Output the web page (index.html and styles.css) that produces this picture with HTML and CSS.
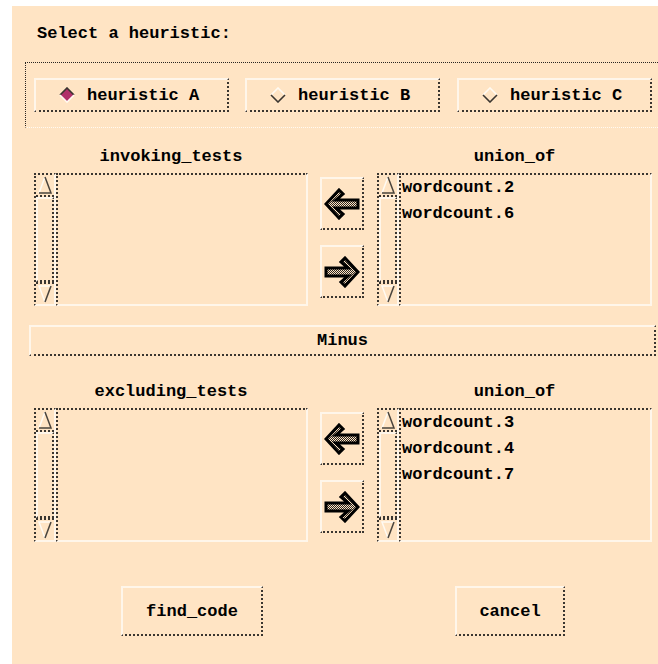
FILE: index.html
```html
<!DOCTYPE html>
<html lang="en">
<head>
    <meta charset="UTF-8">
    <meta name="viewport" content="width=device-width, initial-scale=1.0">
    <title>Select a heuristic</title>

    <link rel="stylesheet" href="styles.css">
</head>
<body>
    <svg class="defs" width="0" height="0">
        <defs>
            <!-- trame grise des flèches -->
            <pattern id="stipple" width="2" height="2" patternUnits="userSpaceOnUse">
                <rect width="2" height="2" fill="#ffe4c4"/>
                <rect width="1" height="1" fill="#2a2622"/>
                <rect x="1" y="1" width="1" height="1" fill="#2a2622"/>
            </pattern>
        </defs>
    </svg>

    <div class="panel">
        <div class="title">Select a heuristic:</div>

        <!-- Choix de l'heuristique -->
        <div class="radio-box">
            <div class="radio raised">
                <svg class="diamond" width="16" height="16" viewBox="0 0 16 16">
                    <polygon points="8,1 15,8 8,15 1,8" fill="#b0306a"/>
                    <polyline points="1,8 8,1 15,8" fill="none" stroke="#3a3530" stroke-width="1.6"/>
                    <polyline points="1,8 8,15 15,8" fill="none" stroke="#fffaf2" stroke-width="1.6"/>
                </svg>
                heuristic A
            </div>
            <div class="radio raised">
                <svg class="diamond" width="16" height="16" viewBox="0 0 16 16">
                    <polyline points="1,8 8,1 15,8" fill="none" stroke="#fffaf2" stroke-width="1.6"/>
                    <polyline points="1,8 8,15 15,8" fill="none" stroke="#3a3530" stroke-width="1.6"/>
                </svg>
                heuristic B
            </div>
            <div class="radio raised">
                <svg class="diamond" width="16" height="16" viewBox="0 0 16 16">
                    <polyline points="1,8 8,1 15,8" fill="none" stroke="#fffaf2" stroke-width="1.6"/>
                    <polyline points="1,8 8,15 15,8" fill="none" stroke="#3a3530" stroke-width="1.6"/>
                </svg>
                heuristic C
            </div>
        </div>

        <!-- Tests invoqués -->
        <div class="section">
            <div class="col-label">invoking_tests</div>
            <div></div>
            <div class="col-label">union_of</div>

            <div class="list">
                <div class="scrollbar">
                    <div class="sb-arrow"><svg width="16" height="20" viewBox="0 0 16 20"><polyline points="2,18 8,2" fill="none" stroke="#fffaf2" stroke-width="1.5"/><polyline points="8,2 14,18 2,18" fill="none" stroke="#4a443d" stroke-width="1.5"/></svg></div>
                    <div class="sb-thumb"></div>
                    <div class="sb-arrow"><svg width="16" height="20" viewBox="0 0 16 20"><polyline points="14,2 2,2 8,18" fill="none" stroke="#fffaf2" stroke-width="1.5"/><polyline points="8,18 14,2" fill="none" stroke="#4a443d" stroke-width="1.5"/></svg></div>
                </div>
                <div class="items"></div>
            </div>

            <div class="arrows">
                <div class="arrow-btn raised">
                    <svg width="36" height="32" viewBox="0 0 36 32"><polygon points="2,16 15,2 19,6 12,12 34,12 34,20 12,20 19,26 15,30" fill="url(#stipple)" stroke="#000" stroke-width="3"/></svg>
                </div>
                <div class="arrow-btn raised">
                    <svg width="36" height="32" viewBox="0 0 36 32"><polygon points="34,16 21,2 17,6 24,12 2,12 2,20 24,20 17,26 21,30" fill="url(#stipple)" stroke="#000" stroke-width="3"/></svg>
                </div>
            </div>

            <div class="list">
                <div class="scrollbar">
                    <div class="sb-arrow"><svg width="16" height="20" viewBox="0 0 16 20"><polyline points="2,18 8,2" fill="none" stroke="#fffaf2" stroke-width="1.5"/><polyline points="8,2 14,18 2,18" fill="none" stroke="#4a443d" stroke-width="1.5"/></svg></div>
                    <div class="sb-thumb"></div>
                    <div class="sb-arrow"><svg width="16" height="20" viewBox="0 0 16 20"><polyline points="14,2 2,2 8,18" fill="none" stroke="#fffaf2" stroke-width="1.5"/><polyline points="8,18 14,2" fill="none" stroke="#4a443d" stroke-width="1.5"/></svg></div>
                </div>
                <div class="items">
                    <div>wordcount.2</div>
                    <div>wordcount.6</div>
                </div>
            </div>
        </div>

        <div class="minus raised">Minus</div>

        <!-- Tests exclus -->
        <div class="section second">
            <div class="col-label">excluding_tests</div>
            <div></div>
            <div class="col-label">union_of</div>

            <div class="list">
                <div class="scrollbar">
                    <div class="sb-arrow"><svg width="16" height="20" viewBox="0 0 16 20"><polyline points="2,18 8,2" fill="none" stroke="#fffaf2" stroke-width="1.5"/><polyline points="8,2 14,18 2,18" fill="none" stroke="#4a443d" stroke-width="1.5"/></svg></div>
                    <div class="sb-thumb"></div>
                    <div class="sb-arrow"><svg width="16" height="20" viewBox="0 0 16 20"><polyline points="14,2 2,2 8,18" fill="none" stroke="#fffaf2" stroke-width="1.5"/><polyline points="8,18 14,2" fill="none" stroke="#4a443d" stroke-width="1.5"/></svg></div>
                </div>
                <div class="items"></div>
            </div>

            <div class="arrows">
                <div class="arrow-btn raised">
                    <svg width="36" height="32" viewBox="0 0 36 32"><polygon points="2,16 15,2 19,6 12,12 34,12 34,20 12,20 19,26 15,30" fill="url(#stipple)" stroke="#000" stroke-width="3"/></svg>
                </div>
                <div class="arrow-btn raised">
                    <svg width="36" height="32" viewBox="0 0 36 32"><polygon points="34,16 21,2 17,6 24,12 2,12 2,20 24,20 17,26 21,30" fill="url(#stipple)" stroke="#000" stroke-width="3"/></svg>
                </div>
            </div>

            <div class="list">
                <div class="scrollbar">
                    <div class="sb-arrow"><svg width="16" height="20" viewBox="0 0 16 20"><polyline points="2,18 8,2" fill="none" stroke="#fffaf2" stroke-width="1.5"/><polyline points="8,2 14,18 2,18" fill="none" stroke="#4a443d" stroke-width="1.5"/></svg></div>
                    <div class="sb-thumb"></div>
                    <div class="sb-arrow"><svg width="16" height="20" viewBox="0 0 16 20"><polyline points="14,2 2,2 8,18" fill="none" stroke="#fffaf2" stroke-width="1.5"/><polyline points="8,18 14,2" fill="none" stroke="#4a443d" stroke-width="1.5"/></svg></div>
                </div>
                <div class="items">
                    <div>wordcount.3</div>
                    <div>wordcount.4</div>
                    <div>wordcount.7</div>
                </div>
            </div>
        </div>

        <!-- Boutons d'action -->
        <div class="actions">
            <div class="btn find raised">find_code</div>
            <div class="btn cancel raised">cancel</div>
        </div>
    </div>
</body>
</html>
```

FILE: styles.css
```css
body {
    margin: 0;
    background: #ffffff;
    font-family: "Liberation Mono", "DejaVu Sans Mono", monospace;
    font-size: 17px;
    font-weight: bold;
    color: #000;
}

.defs {
    position: absolute;
}

.panel {
    margin: 6px 0 0 12px;
    height: 658px;
    padding: 18px 0 0 22px;
    box-sizing: border-box;
    background: #ffe4c4; /* bisque */
    overflow: hidden;
}

.title {
    padding-left: 3px;
    line-height: 20px;
}

/* Relief façon Motif : côté clair plein, côté sombre tramé */
.raised {
    border-width: 2px;
    border-style: solid dotted dotted solid;
    border-color: #fff6ea #3a3530 #3a3530 #fff6ea;
    box-sizing: border-box;
}

.radio-box {
    margin: 18px 0 0 -9px;
    width: 660px;
    padding: 15px 0 15px 8px;
    display: flex;
    gap: 16px;
    border-top: 1px dotted #2a2622;
    border-left: 1px dotted #2a2622;
    border-bottom: 1px dotted #fffaf2;
}

.radio {
    width: 195px;
    height: 34px;
    display: flex;
    align-items: center;
    padding-left: 23px;
    gap: 12px;
}

.radio:last-child {
    margin-left: 1px;
}

.section {
    margin-top: 19px;
    display: grid;
    grid-template-columns: 274px 45px 275px;
    grid-template-rows: 20px 133px;
    column-gap: 12px;
    row-gap: 6px;
}

.section.second {
    margin-top: 26px;
    grid-template-rows: 20px 134px;
}

.col-label {
    text-align: center;
    line-height: 20px;
}

.list {
    display: flex;
}

.scrollbar {
    width: 22px;
    display: flex;
    flex-direction: column;
    border-width: 2px;
    border-style: dotted solid solid dotted;
    border-color: #3a3530 #fff6ea #fff6ea #3a3530;
    box-sizing: border-box;
}

.sb-arrow {
    height: 22px;
    display: flex;
    align-items: center;
    justify-content: center;
    border-bottom: 2px dotted #3a3530;
    box-sizing: border-box;
}

.sb-arrow:last-child {
    border-bottom: none;
    border-top: 2px dotted #3a3530;
}

.sb-thumb {
    flex: 1;
    border-width: 2px;
    border-style: solid dotted dotted solid;
    border-color: #fff6ea #3a3530 #3a3530 #fff6ea;
}

.items {
    flex: 1;
    padding-left: 1px;
    line-height: 26px;
    border-width: 2px;
    border-style: dotted solid solid dotted;
    border-color: #3a3530 #fff6ea #fff6ea #3a3530;
}

.arrows {
    display: flex;
    flex-direction: column;
    gap: 15px;
    padding-top: 4px;
}

.arrow-btn {
    width: 44px;
    height: 53px;
    display: flex;
    align-items: center;
    justify-content: center;
}

.minus {
    margin: 19px 0 0 -5px;
    width: 627px;
    height: 31px;
    display: flex;
    align-items: center;
    justify-content: center;
}

.actions {
    margin-top: 44px;
    padding-left: 87px;
    display: flex;
    gap: 192px;
}

.btn {
    height: 50px;
    display: flex;
    align-items: center;
    justify-content: center;
}

.find {
    width: 142px;
}

.cancel {
    width: 110px;
}
```
